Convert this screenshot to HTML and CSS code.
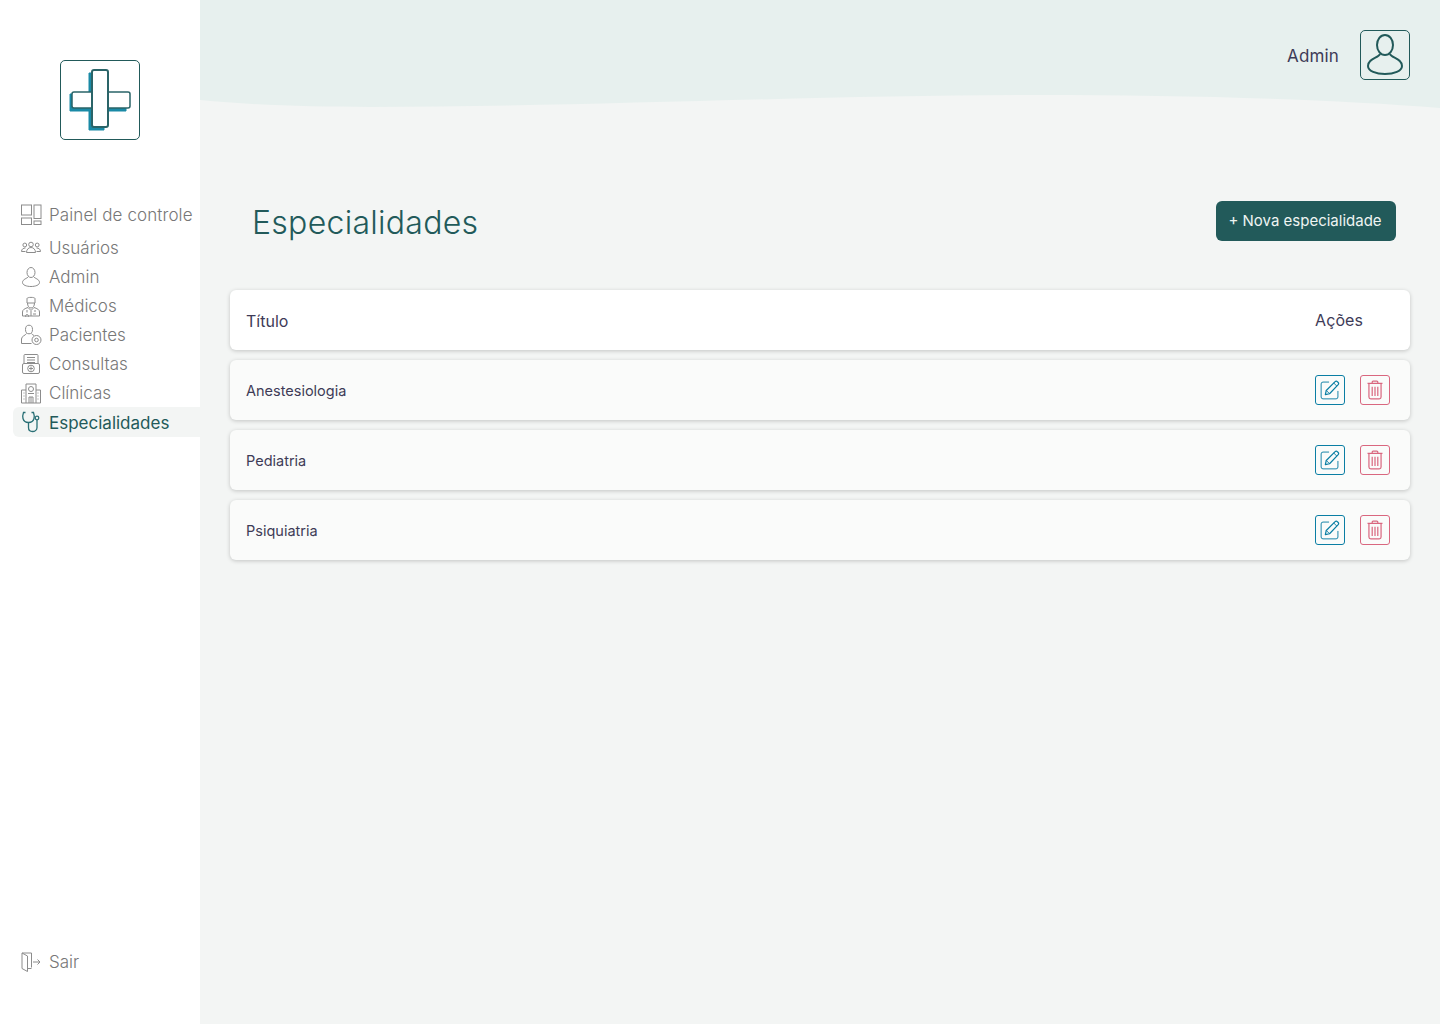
FILE: index.html
```html
<!DOCTYPE html>
<html lang="en">
<head>
    <meta charset="UTF-8">
    <meta name="viewport" content="width=device-width, initial-scale=1.0">
    <title>Especialidades</title>
    <link rel="stylesheet" href="styles.css">
</head>
<body>
    <svg class="defs" width="0" height="0">
        <symbol id="i-edit" viewBox="0 0 30 30">
            <path d="M14 6.500H7.500a2 2 0 0 0-2 2v14a2 2 0 0 0 2 2h14a2 2 0 0 0 2-2V16" fill="none" stroke="currentColor"/>
            <path d="M10 20l1-4.500L20.500 6a1.600 1.600 0 0 1 2.300 0l1 1a1.600 1.600 0 0 1 0 2.300L14.500 19z" fill="none" stroke="currentColor" stroke-width="1.300" stroke-linejoin="round"/>
            <path d="M11 15.500l3.500 3.500M19 7.500l3.500 3.500" fill="none" stroke="currentColor"/>
        </symbol>
        <symbol id="i-trash" viewBox="0 0 30 30">
            <path d="M7 8h16M12 8V6.500a1 1 0 0 1 1-1h4a1 1 0 0 1 1 1V8M8.500 8v14.500a2 2 0 0 0 2 2h9a2 2 0 0 0 2-2V8" fill="none" stroke="currentColor" stroke-width="1.300"/>
            <path d="M12 11.500v10M15 11.500v10M18 11.500v10" fill="none" stroke="currentColor" stroke-width="1.300"/>
        </symbol>
    </svg>

    <div class="layout">
        <!-- Sidebar -->
        <aside class="sidebar">
            <div class="logo">
                <svg width="78" height="78" viewBox="0 0 78 78">
                    <path d="M28 12h15v21h22v17H43v19H28V50H9V33h19z" fill="#1b8aa6" stroke="#1b8aa6" stroke-width="1" stroke-linejoin="round"/>
                    <rect x="11" y="31" width="58" height="16" rx="2" fill="#fff" stroke="#2a6468" stroke-width="1.500"/>
                    <rect x="31" y="9" width="16" height="57" rx="2" fill="#fff" stroke="#2a6468" stroke-width="2"/>
                </svg>
            </div>

            <nav class="nav">
                <a class="nav-item nav-first">
                    <svg class="nav-icon" viewBox="0 0 22 22"><rect x="1.500" y="2" width="10" height="10"/><rect x="14" y="2" width="7" height="13.500"/><rect x="1.500" y="15" width="10" height="6.500"/><rect x="14" y="18" width="7" height="3.500"/></svg>
                    <span class="nav-label">Painel de controle</span>
                </a>
                <a class="nav-item">
                    <svg class="nav-icon" viewBox="0 0 22 22"><circle cx="11" cy="7.500" r="2.300"/><circle cx="4.800" cy="8" r="1.900"/><circle cx="17.200" cy="8" r="1.900"/><path d="M6.500 15.500c0-3 2-5 4.500-5s4.500 2 4.500 5zM5.500 11c-2 0-4 1-4 3.500h4M16.500 11c2 0 4 1 4 3.500h-4"/></svg>
                    <span class="nav-label">Usuários</span>
                </a>
                <a class="nav-item">
                    <svg class="nav-icon" viewBox="0 0 22 22"><ellipse cx="11" cy="6.500" rx="4" ry="5"/><path d="M8.500 10.500c-1 2-6 2.500-6 6 0 2.500 4 4 8.500 4s8.500-1.500 8.500-4c0-3.500-5-4-6-6"/></svg>
                    <span class="nav-label">Admin</span>
                </a>
                <a class="nav-item">
                    <svg class="nav-icon" viewBox="0 0 22 22"><path d="M7 3.500C7 2 15 2 15 3.500V8H7z"/><path d="M7.500 8c0 3 1.500 5 3.500 5s3.500-2 3.500-5"/><path d="M8 12.500c-3 1-5.500 2-5.500 4.500v4h17v-4c0-2.500-2.500-3.500-5.500-4.500l-3 3zM7 15v2.500M15 15v2M11 16v5M7 19.500a1.500 1.500 0 1 0 .1 0M13 19h3"/></svg>
                    <span class="nav-label">Médicos</span>
                </a>
                <a class="nav-item">
                    <svg class="nav-icon" viewBox="0 0 22 22"><ellipse cx="9" cy="5.500" rx="3.500" ry="4.300"/><path d="M6.500 9.500c-1 2-5 2.500-5 5.500v4.500h10M11.500 9.500c.5 1 1.500 1.500 2.500 2"/><circle cx="16.500" cy="16" r="4.500"/><circle cx="16.500" cy="16" r="1.800"/></svg>
                    <span class="nav-label">Pacientes</span>
                </a>
                <a class="nav-item">
                    <svg class="nav-icon" viewBox="0 0 22 22"><path d="M4 10V2.500a1 1 0 0 1 1-1h12a1 1 0 0 1 1 1V10M7 4.500h8M7 7h8M7 9.500h8"/><rect x="2.500" y="10.500" width="17" height="10" rx="1.500"/><circle cx="11" cy="15.500" r="3.300"/><path d="M11 13.500v4M9 15.500h4"/></svg>
                    <span class="nav-label">Consultas</span>
                </a>
                <a class="nav-item">
                    <svg class="nav-icon" viewBox="0 0 22 22"><path d="M6 21V2h10v19M6 8H1.500v13h19V8H16M9 21v-6h4v6M11 15v6M3.500 11h1M3.500 14h1M3.500 17h1M17.500 11h1M17.500 14h1M17.500 17h1"/><circle cx="11" cy="7" r="2.500"/><path d="M8 11.500h6"/></svg>
                    <span class="nav-label">Clínicas</span>
                </a>
                <a class="nav-item active">
                    <svg class="nav-icon" viewBox="0 0 22 22"><path d="M5.500 1.500H3.500C2.800 3.500 2.500 5.500 3 7.500 3.500 9.500 5.500 11.500 8.500 11.500S13.500 9.500 14 7.500C14.500 5.500 14.200 3.500 13.500 1.500H11.500"/><path d="M8.500 11.500V16.500c0 2.500 1.800 4 4 4s4.500-1.500 4.500-4V9"/><circle cx="17" cy="7" r="1.800"/></svg>
                    <span class="nav-label">Especialidades</span>
                </a>
            </nav>

            <a class="nav-item logout">
                <svg class="nav-icon" viewBox="0 0 22 22"><path d="M2 2h9.500v14.500M2 2v15.500L7.500 20.500V5L2 2M7.500 17.500h4M13 11h7M17.500 8.500L20 11l-2.500 2.500"/></svg>
                Sair
            </a>
        </aside>

        <div class="main">
            <!-- Top wave -->
            <header class="topbar">
                <svg class="wave" viewBox="0 0 1240 110" preserveAspectRatio="none">
                    <path d="M0 0H1240V108C1130 99 980 95 840 95 620 95 380 107 170 107 110 107 50 105 0 100z" fill="#e7f0ee"/>
                </svg>
                <span class="user-name">Admin</span>
                <div class="avatar">
                    <svg width="48" height="48" viewBox="1 1 48 48"><ellipse cx="25" cy="15" rx="8" ry="10"/><path d="M20 24c-1 4-12 4-12 12 0 5 8 8 17 8s17-3 17-8c0-8-11-8-12-12"/></svg>
                </div>
            </header>

            <section class="content">
                <div class="page-head">
                    <h1 class="page-title">Especialidades</h1>
                    <button class="btn">+ Nova especialidade</button>
                </div>

                <div class="table">
                    <div class="row row-head">
                        <span class="cell-title">Título</span>
                        <span class="actions-title">Ações</span>
                    </div>
                    <div class="row">
                        <span class="cell-title">Anestesiologia</span>
                        <div class="actions">
                            <a class="icon-btn edit"><svg><use href="#i-edit"/></svg></a>
                            <a class="icon-btn remove"><svg><use href="#i-trash"/></svg></a>
                        </div>
                    </div>
                    <div class="row">
                        <span class="cell-title">Pediatria</span>
                        <div class="actions">
                            <a class="icon-btn edit"><svg><use href="#i-edit"/></svg></a>
                            <a class="icon-btn remove"><svg><use href="#i-trash"/></svg></a>
                        </div>
                    </div>
                    <div class="row">
                        <span class="cell-title">Psiquiatria</span>
                        <div class="actions">
                            <a class="icon-btn edit"><svg><use href="#i-edit"/></svg></a>
                            <a class="icon-btn remove"><svg><use href="#i-trash"/></svg></a>
                        </div>
                    </div>
                </div>
            </section>
        </div>
    </div>
</body>
</html>
```

FILE: styles.css
```css
* {
    box-sizing: border-box;
}

body {
    margin: 0;
    background-color: #f3f5f4;
    font-family: "Inter", "Liberation Sans", sans-serif;
    color: #3e3b57;
}

.defs {
    display: block;
    height: 0;
}

.layout {
    display: flex;
    height: 1024px;
}

.sidebar {
    width: 200px;
    background-color: #fff;
    padding-top: 60px;
    display: flex;
    flex-direction: column;
}

.logo {
    width: 80px;
    height: 80px;
    margin: 0 auto 59px;
    border: 1px solid #225a5a;
    border-radius: 5px;
}

.logo svg {
    display: block;
}

.nav {
    flex: 1;
    display: flex;
    flex-direction: column;
    padding-left: 13px;
}

.nav-item {
    display: flex;
    align-items: center;
    gap: 7px;
    height: 29px;
    padding-left: 7px;
    font-size: 17px;
    font-weight: 300;
    color: #777;
    border-radius: 6px 0 0 6px;
}

.nav-label {
    padding-top: 1px;
}

.nav-first {
    height: 30px;
    margin-bottom: 4px;
    white-space: nowrap;
    letter-spacing: 0.1px;
}

.nav-icon {
    width: 22px;
    height: 22px;
    flex-shrink: 0;
    fill: none;
    stroke: #8c8c8c;
    stroke-width: 1;
}

.active {
    height: 30px;
    color: #225a5a;
    font-weight: 400;
    background-color: #f3f5f4;
}

.active .nav-icon {
    stroke: #2a7076;
    stroke-width: 1.300;
}

.logout {
    margin: 0 0 48px 13px;
}

.main {
    flex: 1;
    min-width: 0;
}

.topbar {
    position: relative;
    height: 110px;
    display: flex;
    justify-content: flex-end;
    padding: 30px 30px 0 0;
}

.wave {
    position: absolute;
    top: 0;
    left: 0;
    width: 100%;
    height: 110px;
}

.user-name {
    position: relative;
    font-size: 17px;
    line-height: 52px;
    margin-right: 21px;
    letter-spacing: 0.15px;
}

.avatar {
    position: relative;
    width: 50px;
    height: 50px;
    border: 1px solid #225a5a;
    border-radius: 5px;
}

.avatar svg {
    display: block;
    fill: none;
    stroke: #225a5a;
    stroke-width: 2;
}

.content {
    padding: 91px 30px 0;
}

.page-head {
    display: flex;
    justify-content: space-between;
    align-items: flex-start;
    height: 89px;
    padding: 0 14px 0 22px;
}

.page-title {
    margin: 0;
    font-size: 32px;
    font-weight: 300;
    line-height: 44px;
    letter-spacing: 0.28px;
    color: #225a5a;
}

.btn {
    width: 180px;
    height: 40px;
    padding: 0 2px 2px 0;
    background-color: #225a5a;
    color: #eef4f2;
    border: none;
    border-radius: 6px;
    font-family: inherit;
    font-size: 15px;
    cursor: pointer;
}

.table {
    display: flex;
    flex-direction: column;
    gap: 10px;
}

.row {
    display: flex;
    justify-content: space-between;
    align-items: center;
    height: 60px;
    padding: 0 20px 0 16px;
    background-color: #fafbfa;
    border-radius: 6px;
    box-shadow: 0 1px 4px rgba(0,0,0,0.2);
    font-size: 14.5px;
}

.cell-title {
    padding-top: 1px;
}

.row-head {
    background-color: #fff;
    font-size: 16px;
}

.actions-title {
    width: 75px;
    letter-spacing: 0.1px;
}

.actions {
    display: flex;
    gap: 15px;
}

.icon-btn {
    display: block;
    width: 30px;
    height: 30px;
    border: 1px solid;
    border-radius: 3px;
}

.icon-btn svg {
    display: block;
    width: 28px;
    height: 28px;
}

.edit {
    color: #0a7ea4;
}

.remove {
    color: #d9677f;
}
```
